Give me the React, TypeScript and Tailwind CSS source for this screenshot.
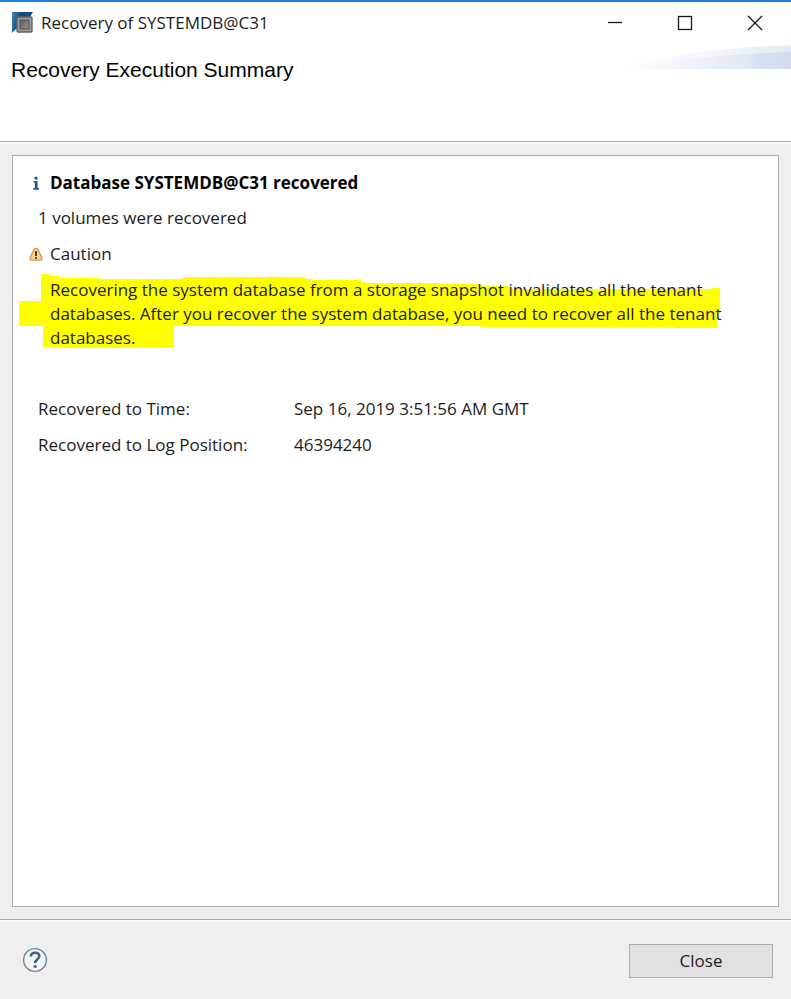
import type { ReactNode } from "react";

const RESULTS = [
  { label: "Recovered to Time:", value: "Sep 16, 2019 3:51:56 AM GMT" },
  { label: "Recovered to Log Position:", value: "46394240" },
];

function DatabaseIcon() {
  return (
    <svg className="h-6 w-6 shrink-0" viewBox="0 0 24 24" aria-hidden="true">
      <defs>
        <linearGradient id="db-blue" x1="0" y1="0" x2="1" y2="0.3">
          <stop offset="0" stopColor="#4a84bc" />
          <stop offset="0.45" stopColor="#0d4a85" />
          <stop offset="1" stopColor="#2a4a72" />
        </linearGradient>
        <linearGradient id="db-grey" x1="0" y1="0" x2="1" y2="1">
          <stop offset="0" stopColor="#5c5c5c" />
          <stop offset="1" stopColor="#969696" />
        </linearGradient>
      </defs>
      <path d="M2 1H23L20 6L6 18L2 22Z" fill="url(#db-blue)" />
      <rect x="7" y="6" width="15" height="15" rx="1" fill="#9b9b9b" stroke="#626262" strokeWidth="1.4" />
      <rect x="10" y="9" width="9" height="9" fill="url(#db-grey)" stroke="#555555" />
    </svg>
  );
}

function InfoIcon() {
  return (
    <svg className="h-4 w-4" viewBox="0 0 16 16" fill="#1c5a9c" aria-hidden="true">
      <circle cx="8" cy="3.2" r="1.6" />
      <path d="M5.5 6H9.6V13H11V14.8H5.3V13H6.8V7.6H5.5Z" />
    </svg>
  );
}

function CautionIcon() {
  return (
    <svg className="h-4 w-4" viewBox="0 0 16 16" aria-hidden="true">
      <path
        d="M8 2.4C9 2.4 9.6 2.8 10 3.6L13.7 11.4C14.3 13 13.7 14.2 12.3 14.2H3.7C2.3 14.2 1.7 13 2.3 11.4L6 3.6C6.4 2.8 7 2.4 8 2.4Z"
        fill="#fbd99a"
        stroke="#d39a4c"
        strokeWidth="1.3"
      />
      <path d="M7 5H9V10H7ZM7 11H9V12.8H7Z" fill="#5c3a12" />
    </svg>
  );
}

function HelpIcon() {
  return (
    <svg className="h-[26px] w-[26px]" viewBox="0 0 26 26" fill="none" aria-hidden="true">
      <circle cx="13" cy="13" r="11.4" fill="#f4f5f6" stroke="#71839b" strokeWidth="1.4" />
      <path
        d="M8.8 9.6C8.8 7 10.5 5.7 13.1 5.7C15.7 5.7 17.3 7.1 17.3 9.2C17.3 12.2 13.2 12.3 13.2 16"
        stroke="#466080"
        strokeWidth="2.6"
      />
      <ellipse cx="13.1" cy="19.6" rx="1.8" ry="1.4" fill="#466080" />
    </svg>
  );
}

function HeaderSwoosh() {
  return (
    <svg className="h-6 w-[170px] shrink-0" viewBox="0 0 170 24" aria-hidden="true">
      <defs>
        <linearGradient id="swoosh-back" x1="0" y1="0" x2="1" y2="0">
          <stop offset="0" stopColor="#ffffff" />
          <stop offset="0.5" stopColor="#f5f7fc" />
          <stop offset="1" stopColor="#e2eaf5" />
        </linearGradient>
        <linearGradient id="swoosh" x1="0" y1="0" x2="1" y2="0">
          <stop offset="0" stopColor="#ffffff" />
          <stop offset="0.35" stopColor="#f2f5fb" />
          <stop offset="0.75" stopColor="#e0e8f4" />
          <stop offset="0.8" stopColor="#d6e2f0" />
          <stop offset="1" stopColor="#cfddec" />
        </linearGradient>
      </defs>
      <path d="M0 23C40 10 95 2 170 -1V23Z" fill="url(#swoosh-back)" />
      <path d="M0 23C50 14 105 8 170 6V23Z" fill="url(#swoosh)" />
    </svg>
  );
}

function WindowButton({ label, children }: { label: string; children: ReactNode }) {
  return (
    <button type="button" aria-label={label} className="flex h-[42px] w-[70px] items-center justify-center">
      <svg className="h-4 w-4" viewBox="0 0 16 16" fill="none" stroke="#1a1a1a" strokeWidth="1.3">
        {children}
      </svg>
    </button>
  );
}

function MarkerStroke() {
  return (
    <svg className="absolute -left-8 top-0 h-[76px] w-[704px] max-w-none" viewBox="0 0 704 76" aria-hidden="true">
      <path
        d="M23 0H32V2H42V4H82V5H165V3H287V5H294V6H343V8H348V9H420V10H464V12H492V15H694V14H702V39H699V54H655V53H464V52H156V74H32V73H25V52H1V27H23Z"
        fill="#ffff00"
      />
    </svg>
  );
}

export default function App() {
  return (
    <div className="flex min-h-screen flex-col border-t-2 border-[#1a80d9] bg-[#efefef] font-['Open_Sans','Noto_Sans',sans-serif] text-[17px] leading-6 text-[#1c1c1c]">
      <header className="border-b border-[#a9a9a9] bg-white">
        <div className="flex items-center pr-px">
          <div className="flex flex-1 items-center gap-[7px] pl-[10px]">
            <DatabaseIcon />
            <span>Recovery of SYSTEMDB@C31</span>
          </div>
          <WindowButton label="Minimize">
            <path d="M1 7.5H15" />
          </WindowButton>
          <WindowButton label="Maximize">
            <rect x="1.5" y="1.5" width="13" height="13" />
          </WindowButton>
          <WindowButton label="Close window">
            <path d="M1 1L15 15M15 1L1 15" />
          </WindowButton>
        </div>
        <div className="flex h-[97px] items-start justify-between pt-[2px]">
          <h1 className="pl-[11px] pt-3 font-['Liberation_Sans',sans-serif] text-[21px] leading-6 text-black">
            Recovery Execution Summary
          </h1>
          <HeaderSwoosh />
        </div>
      </header>

      <main className="flex flex-1 flex-col border-t-2 border-[#f8f8f8] p-3 pt-[11px]">
        <section className="flex-1 border border-[#acaeb5] bg-white pl-[15px] pt-[15px]">
          <h2 className="flex items-center gap-[6px] font-bold text-black">
            <InfoIcon />
            Database SYSTEMDB@C31 recovered
          </h2>
          <p className="mt-[11px] pl-[10px]">1 volumes were recovered</p>
          <p className="mt-3 flex items-center gap-[6px]">
            <CautionIcon />
            Caution
          </p>
          <div className="relative isolate ml-[22px] mt-2 whitespace-nowrap pt-1">
            <MarkerStroke />
            <p className="relative">
              Recovering the system database from a storage snapshot invalidates all the tenant
              <br />
              databases. After you recover the system database, you need to recover all the tenant
              <br />
              databases.
            </p>
          </div>
          <dl className="mt-[47px] flex flex-col gap-3 pl-[10px]">
            {RESULTS.map((row) => (
              <div key={row.label} className="flex">
                <dt className="w-64">{row.label}</dt>
                <dd>{row.value}</dd>
              </div>
            ))}
          </dl>
        </section>
      </main>

      <footer className="border-t border-[#a9a9a9]">
        <div className="flex items-start justify-between border-t-2 border-[#f8f8f8] pb-[21px] pl-[22px] pr-[18px] pt-[22px]">
          <button type="button" aria-label="Help" className="mt-[3px]">
            <HelpIcon />
          </button>
          <button type="button" className="h-[34px] w-36 border border-[#adadad] bg-[#e1e1e1]">
            Close
          </button>
        </div>
      </footer>
    </div>
  );
}
